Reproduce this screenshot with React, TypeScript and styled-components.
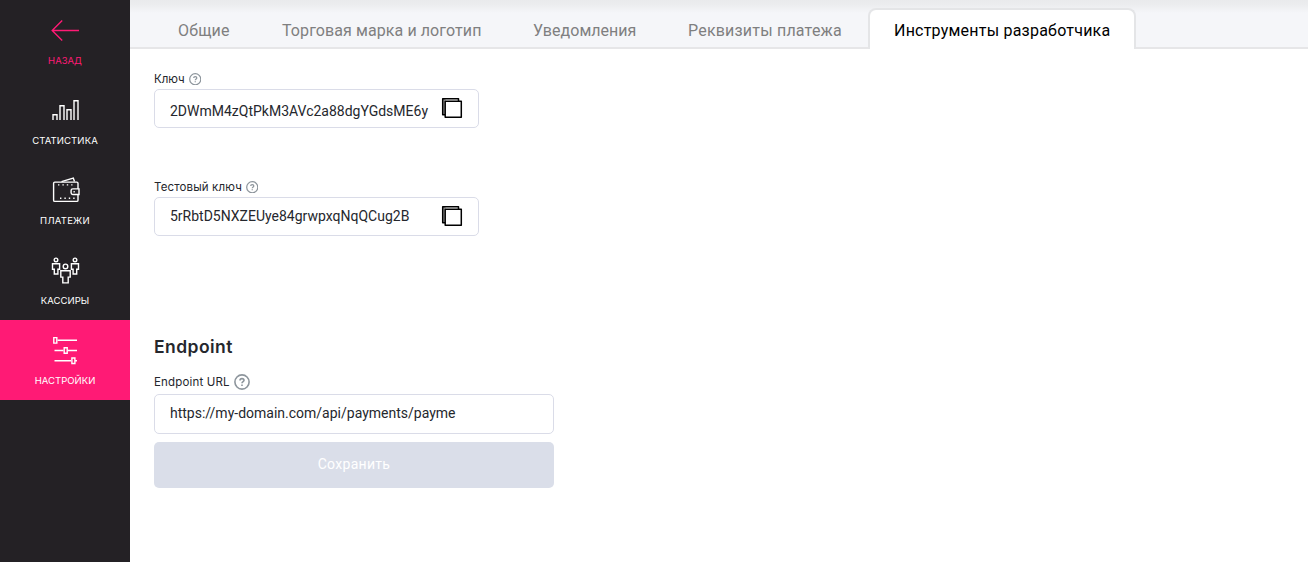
import React from "react";
import styled, { createGlobalStyle } from "styled-components";

const GlobalStyle = createGlobalStyle`
  * { box-sizing: border-box; }
  body { margin: 0; background: #fff; font-family: Roboto, "Liberation Sans", sans-serif; color: #25272d; }
`;

const Page = styled.div`
  display: flex;
  height: 562px;
  overflow: hidden;
`;

const Sidebar = styled.nav`
  width: 130px;
  flex: none;
  background: #242125;
`;

const NavItem = styled.a<{ $active?: boolean; $accent?: boolean }>`
  display: flex;
  flex-direction: column;
  align-items: center;
  height: 80px;
  padding-top: 14px;
  background: ${(p) => (p.$active ? "#ff1a75" : "transparent")};
  color: ${(p) => (p.$accent ? "#ff1a75" : "#fff")};
`;

const NavIcon = styled.svg`
  width: 32px;
  height: 32px;
  fill: none;
  stroke: currentColor;
  stroke-width: 1.4;
`;

const NavLabel = styled.span<{ $spacing: number }>`
  margin-top: 8px;
  font-family: Inter, Roboto, sans-serif;
  font-size: 9.5px;
  line-height: 14px;
  white-space: nowrap;
  letter-spacing: ${(p) => p.$spacing}px;
`;

const Main = styled.main`
  flex: 1;
  min-width: 0;
`;

const TabBar = styled.div`
  display: flex;
  align-items: flex-end;
  height: 49px;
  padding-left: 22px;
  background: linear-gradient(#e9eaec 0, #ebecee 4px, #f5f6f9 13px);
  box-shadow: inset 0 -2px #e6e6e8;
`;

const Tab = styled.div<{ $width: number; $spacing: number; $active?: boolean }>`
  width: ${(p) => p.$width}px;
  height: 41px;
  padding-left: 24px;
  border: 2px solid ${(p) => (p.$active ? "#e4e5e7" : "transparent")};
  border-bottom: 0;
  border-radius: 8px 8px 0 0;
  background: ${(p) => (p.$active ? "#fff" : "transparent")};
  color: ${(p) => (p.$active ? "#000" : "#7f7f80")};
  font-size: 16px;
  line-height: 41px;
  white-space: nowrap;
  letter-spacing: ${(p) => p.$spacing}px;
`;

const Content = styled.div`
  display: flex;
  flex-direction: column;
  align-items: flex-start;
  padding: 22px 24px;
`;

const Field = styled.div<{ $height: number }>`
  height: ${(p) => p.$height}px;
`;

const Label = styled.label<{ $height: number; $spacing: number }>`
  display: flex;
  align-items: center;
  gap: 4px;
  height: ${(p) => p.$height}px;
  padding-bottom: 2px;
  font-family: Inter, Roboto, sans-serif;
  font-size: 11.5px;
  line-height: 14px;
  white-space: nowrap;
  letter-spacing: ${(p) => p.$spacing}px;
`;

const InputBox = styled.div<{ $width: number; $height: number; $shift?: number }>`
  display: flex;
  justify-content: space-between;
  width: ${(p) => p.$width}px;
  height: ${(p) => p.$height}px;
  padding: 0 15px;
  border: 1px solid #dadce8;
  border-radius: 5px;
  font-size: 14px;
  line-height: ${(p) => p.$height - 2 + (p.$shift ?? 0)}px;
  white-space: nowrap;
`;

const CopyButton = styled.svg`
  flex: none;
  width: 22px;
  height: 22px;
  margin-top: 7px;
`;

const Heading = styled.h2`
  margin: 0;
  height: 36px;
  font-family: Inter, Roboto, sans-serif;
  font-size: 17.5px;
  font-weight: 600;
  line-height: 24px;
  letter-spacing: 0.45px;
`;

const SaveButton = styled.button`
  width: 400px;
  height: 46px;
  margin-top: 8px;
  padding: 0 0 2px;
  border: 0;
  border-radius: 5px;
  background: #dadee9;
  color: #fff;
  font-family: inherit;
  font-size: 14px;
  letter-spacing: 0.3px;
`;

const Help = ({ size }: { size: number }) => (
  <svg width={size} height={size} viewBox="0 0 16 16" fill="none" stroke="#8d959c" strokeWidth={1.6}>
    <circle cx="8" cy="8" r="7.1" />
    <path d="M6 6.5C6 5.2 6.8 4.6 8 4.6s2 .7 2 1.7c0 1.3-2 1.3-2 3" />
    <path d="M8 10.4v1.5" />
  </svg>
);

const CopyIcon = () => (
  <CopyButton viewBox="0 0 22 22" fill="none" stroke="#000" strokeWidth={1.5} strokeLinejoin="round">
    <path d="M2 2h2.5v16H2Z" fill="#999" stroke="none" />
    <path d="M4 17.8H1.7V1.8h15.8V4" />
    <rect x="4.2" y="4.2" width="16.1" height="16.1" fill="#fff" />
  </CopyButton>
);

const icons = {
  back: <path d="M13.2 6.5 3.2 16.5l10 10M3.4 16.5H30" />,
  stats: <path d="M4 26v-5.3h4V26M11 26V11.7h4V26M18 26V15.7h4V26M25 26V6.7h4V26" />,
  wallet: (
    <>
      <path d="M29 15V9.3Q29 8.1 27.8 8.1H5.8Q4.6 8.1 4.6 9.3v16.9q0 1.2 1.2 1.2h22q1.2 0 1.2-1.2V20.5" />
      <path d="M12.5 7.6 24.3 4 25.5 7.5M30 14.9h-6.2q-1.7 0-1.7 1.7v2.2q0 1.7 1.7 1.7H30Z" />
      <path d="M24.5 17.7h1.3" />
      <path strokeDasharray="1.4 3" d="M9 10.9h14.5M11 24.2h15" />
    </>
  ),
  people: (
    <>
      <circle cx="7" cy="5.9" r="1.8" />
      <circle cx="26" cy="5.9" r="1.8" />
      <circle cx="16.5" cy="12.4" r="2.3" />
      <path d="M10.6 14V9.7H3.5v5.6h1.8v4.7h3.6v-4.7h1.7V14" />
      <path d="M22.4 14V9.7h7.1v5.6h-1.8v4.7h-3.6v-4.7h-1.7V14" />
      <path d="M11.8 16.8h9.4v6.3h-2v5.8h-5.4v-5.8h-2Z" />
    </>
  ),
  settings: (
    <>
      <path d="M8.5 6.3H28M5.5 16.5h9M18.5 16.5H28M5.5 26.8H22M26 26.8h2" />
      <path d="M4.8 3.6h3v5.5h-3ZM15.2 13.8h3v5.5h-3ZM22.9 24h3v5.5h-3Z" />
    </>
  ),
};

const nav = [
  { icon: icons.back, label: "НАЗАД", spacing: 0, accent: true },
  { icon: icons.stats, label: "СТАТИСТИКА", spacing: 0.12 },
  { icon: icons.wallet, label: "ПЛАТЕЖИ", spacing: 0.25 },
  { icon: icons.people, label: "КАССИРЫ", spacing: 0.05 },
  { icon: icons.settings, label: "НАСТРОЙКИ", spacing: 0.03, active: true },
];

const tabs = [
  { label: "Общие", width: 104, spacing: 0.2 },
  { label: "Торговая марка и логотип", width: 251, spacing: 0.09 },
  { label: "Уведомления", width: 155, spacing: 0.03 },
  { label: "Реквизиты платежа", width: 206, spacing: 0.2 },
  { label: "Инструменты разработчика", width: 268, spacing: 0.22, active: true },
];

export default function App() {
  return (
    <Page>
      <GlobalStyle />
      <Sidebar>
        {nav.map((n) => (
          <NavItem key={n.label} $active={n.active} $accent={n.accent}>
            <NavIcon viewBox="0 0 32 32">{n.icon}</NavIcon>
            <NavLabel $spacing={n.spacing}>{n.label}</NavLabel>
          </NavItem>
        ))}
      </Sidebar>
      <Main>
        <TabBar>
          {tabs.map((t) => (
            <Tab key={t.label} $width={t.width} $spacing={t.spacing} $active={t.active}>
              {t.label}
            </Tab>
          ))}
        </TabBar>
        <Content>
          <Field $height={108}>
            <Label $height={18} $spacing={-0.05}>Ключ <Help size={12.5} /></Label>
            <InputBox $width={325} $height={39} $shift={5}>
              2DWmM4zQtPkM3AVc2a88dgYGdsME6y
              <CopyIcon />
            </InputBox>
          </Field>
          <Field $height={156}>
            <Label $height={18} $spacing={0.14}>Тестовый ключ <Help size={12.5} /></Label>
            <InputBox $width={325} $height={39}>
              5rRbtD5NXZEUye84grwpxqNqQCug2B
              <CopyIcon />
            </InputBox>
          </Field>
          <Heading>Endpoint</Heading>
          <Label $height={23} $spacing={0.16}>Endpoint URL <Help size={16} /></Label>
          <InputBox $width={400} $height={40} $shift={-2}>https://my-domain.com/api/payments/payme</InputBox>
          <SaveButton>Сохранить</SaveButton>
        </Content>
      </Main>
    </Page>
  );
}
